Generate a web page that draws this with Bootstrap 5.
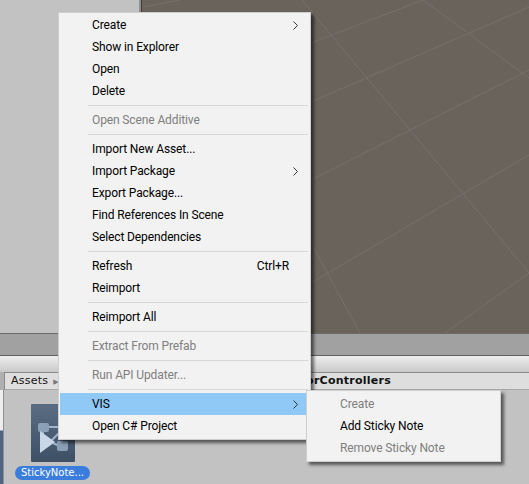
<!DOCTYPE html>
<html lang="en">
<head>
<meta charset="utf-8">
<title>Unity context menu</title>
<link href="https://cdn.jsdelivr.net/npm/bootstrap@5.3.0/dist/css/bootstrap.min.css" rel="stylesheet">
<style>
html,body{height:484px;overflow:hidden;background:#c2c2c2}
.stage{width:529px;height:484px;position:relative;overflow:hidden}
.upper{height:333px}
.leftpane{width:139px;background:#c2c2c2}
.splitter{width:3px;background:linear-gradient(90deg,#8e8e8e,#8e8e8e 2px,#3f3d3b 2px)}
.scenepane{background:#6a635c;min-width:0}
.scenepane svg{display:block;width:100%;height:100%}
.scenepane line{stroke:#76706a;stroke-width:1}
.band{height:22px;background:#a1a1a1;border-top:1px solid #6b6b6b}
.toolbar{height:17px;background:linear-gradient(#eeeeee,#c9c9c9);border-top:1px solid #5e5e5e}
.crumbs{height:18px;background:#c2c2c2}
.crumbgap{width:5px;background:#b0b0b0;border-right:1px solid #8a8a8a}
.crumbbar{background:#dedede;border-top:1px solid #8a8a8a;border-bottom:1px solid #a8a8a8;padding:0 138px 0 6px;font:11px/16px "DejaVu Sans",sans-serif;color:#111;letter-spacing:.25px}
.crumbarrow{color:#777;font-size:7px;margin-left:5px}
.crumbbold{font-weight:700}
.lower{height:94px;background:#c2c2c2}
.sidestrip{width:4px;background:linear-gradient(#ededed,#ededed 40px,#4f6485 41px);border-right:1px solid #8f8f8f}
.tile{width:75px;margin:14px 0 0 11px}
.assetbox{width:44px;height:58px;margin:0 auto;background:linear-gradient(#5a6d83,#3d5064);border-radius:1px}
.assetbox svg{display:block;width:100%;height:100%}
.assetname{margin-top:4px;height:14px;width:75px;background:#3b7ddd;border-radius:7px;color:#fff;font:10px/14px "DejaVu Sans",sans-serif;text-align:center;white-space:nowrap}
.ctx.dropdown-menu{display:block;padding:1px 1px 2px;margin:0;border:1px solid #cfcfcf;border-radius:0;background:#f2f2f2;box-shadow:3px 3px 3px rgba(0,0,0,.55);font:12px/22px Roboto,sans-serif;min-width:0;z-index:5}
.ctxmain{left:58px;top:12px;width:253px}
.ctxsub{left:306px;top:390px;width:195px;z-index:6;padding-top:2px!important}
.ctx .dropdown-item{display:flex;justify-content:space-between;align-items:center;height:22px;padding:0 11px 0 32px;color:#000;background:none;line-height:22px;font-size:12px;letter-spacing:-.12px}
.ctx .dropdown-item.off{color:#7f7f7f}
.ctx .dropdown-item.hot{background:#90c8f6}
.ctx .dropdown-divider{margin:3px 1px 3px 28px;border-top:1px solid #d7d7d7;opacity:1}
.ctx svg{display:block}
.shortcut{margin-right:9px}
</style>
</head>
<body>
<div class="stage">
  <div class="upper d-flex">
    <div class="leftpane"></div>
    <div class="splitter"></div>
    <div class="scenepane flex-grow-1">
      <svg viewBox="142 0 387 333" preserveAspectRatio="none">
        <line x1="143" y1="7" x2="180" y2="0"/>
        <line x1="311" y1="43" x2="423" y2="0"/>
        <line x1="311" y1="102" x2="529" y2="7"/>
        <line x1="311" y1="180" x2="529" y2="70"/>
        <line x1="311" y1="283" x2="529" y2="155"/>
        <line x1="445" y1="333" x2="529" y2="273"/>
        <line x1="302" y1="0" x2="529" y2="273"/>
        <line x1="423" y1="0" x2="529" y2="78"/>
        <line x1="313" y1="247" x2="360" y2="333"/>
      </svg>
    </div>
  </div>
  <div class="band"></div>
  <div class="toolbar"></div>
  <div class="crumbs d-flex">
    <div class="crumbgap"></div>
    <div class="crumbbar flex-grow-1 d-flex justify-content-between">
      <span>Assets<span class="crumbarrow">&#9654;</span></span>
      <span class="crumbbold">AnimatorControllers</span>
    </div>
  </div>
  <div class="lower d-flex">
    <div class="sidestrip"></div>
    <div class="tile">
      <div class="assetbox">
        <svg viewBox="0 0 44 58" aria-hidden="true">
          <g stroke="#9fb4c9" stroke-width="2" fill="none">
            <line x1="12" y1="24" x2="12" y2="34"/>
            <line x1="14" y1="43" x2="44" y2="13"/>
            <line x1="16" y1="23" x2="44" y2="23"/>
            <line x1="20" y1="38" x2="28" y2="42"/>
          </g>
          <rect x="7" y="19" width="11" height="9" rx="2" fill="#8aa0b7"/>
          <rect x="26" y="37" width="11" height="10" rx="2" fill="#8aa0b7"/>
          <path d="M9 27 L24 38 L9 49 Z" fill="#c9d8e8"/>
        </svg>
      </div>
      <div class="assetname">StickyNote...</div>
    </div>
  </div>

  <div class="ctx ctxmain dropdown-menu position-absolute">
    <a class="dropdown-item" href="#"><span>Create</span><svg width="5" height="9" viewBox="0 0 5 9"><path d="M.5.5l4 4-4 4" fill="none" stroke="#333"/></svg></a>
    <a class="dropdown-item" href="#">Show in Explorer</a>
    <a class="dropdown-item" href="#">Open</a>
    <a class="dropdown-item" href="#">Delete</a>
    <div class="dropdown-divider"></div>
    <a class="dropdown-item off" href="#">Open Scene Additive</a>
    <div class="dropdown-divider"></div>
    <a class="dropdown-item" href="#">Import New Asset...</a>
    <a class="dropdown-item" href="#"><span>Import Package</span><svg width="5" height="9" viewBox="0 0 5 9"><path d="M.5.5l4 4-4 4" fill="none" stroke="#333"/></svg></a>
    <a class="dropdown-item" href="#">Export Package...</a>
    <a class="dropdown-item" href="#">Find References In Scene</a>
    <a class="dropdown-item" href="#">Select Dependencies</a>
    <div class="dropdown-divider"></div>
    <a class="dropdown-item" href="#"><span>Refresh</span><span class="shortcut">Ctrl+R</span></a>
    <a class="dropdown-item" href="#">Reimport</a>
    <div class="dropdown-divider"></div>
    <a class="dropdown-item" href="#">Reimport All</a>
    <div class="dropdown-divider"></div>
    <a class="dropdown-item off" href="#">Extract From Prefab</a>
    <div class="dropdown-divider"></div>
    <a class="dropdown-item off" href="#">Run API Updater...</a>
    <div class="dropdown-divider"></div>
    <a class="dropdown-item hot" href="#"><span>VIS</span><svg width="5" height="9" viewBox="0 0 5 9"><path d="M.5.5l4 4-4 4" fill="none" stroke="#333"/></svg></a>
    <a class="dropdown-item" href="#">Open C# Project</a>
  </div>

  <div class="ctx ctxsub dropdown-menu position-absolute">
    <a class="dropdown-item off" href="#">Create</a>
    <a class="dropdown-item" href="#">Add Sticky Note</a>
    <a class="dropdown-item off" href="#">Remove Sticky Note</a>
  </div>
</div>
<script src="https://cdn.jsdelivr.net/npm/bootstrap@5.3.0/dist/js/bootstrap.bundle.min.js"></script>
</body>
</html>
